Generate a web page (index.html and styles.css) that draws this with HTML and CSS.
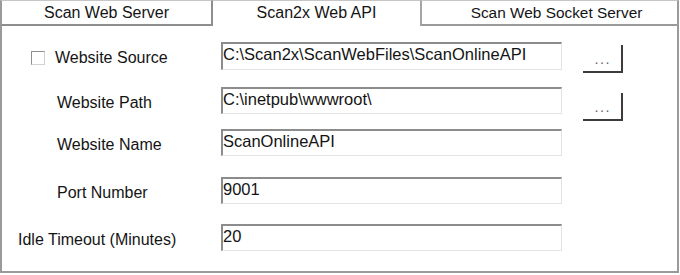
FILE: index.html
```html
<!DOCTYPE html>
<html>
<head>
<meta charset="utf-8">
<link rel="stylesheet" href="styles.css">
</head>
<body>
<div class="window">
  <div class="tabs">
    <div class="tab tab-first">Scan Web Server</div>
    <div class="tab tab-active">Scan2x Web API</div>
    <div class="tab tab-last">Scan Web Socket Server</div>
  </div>
  <div class="panel">
    <div class="form">
      <div class="label label-check"><span class="checkbox"></span>Website Source</div>
      <div class="field field-tall">C:\Scan2x\ScanWebFiles\ScanOnlineAPI</div>
      <div class="browse browse-1">...</div>

      <div class="label">Website Path</div>
      <div class="field">C:\inetpub\wwwroot\</div>
      <div class="browse browse-2">...</div>

      <div class="label">Website Name</div>
      <div class="field">ScanOnlineAPI</div>
      <div class="spacer"></div>

      <div class="label">Port Number</div>
      <div class="field">9001</div>
      <div class="spacer"></div>

      <div class="label label-wide">Idle Timeout (Minutes)</div>
      <div class="field">20</div>
      <div class="spacer"></div>
    </div>
  </div>
</div>
</body>
</html>
```

FILE: styles.css
```css
* {
  box-sizing: border-box;
}

html, body {
  margin: 0;
  padding: 0;
  background: #ffffff;
}

body {
  width: 680px;
  height: 275px;
  font-family: "Liberation Sans", Arial, sans-serif;
  font-size: 16px;
  color: #141414;
}

.window {
  width: 679px;
}

.tabs {
  display: flex;
  height: 26px;
}

.tab {
  height: 26px;
  line-height: 23px;
  text-align: center;
  white-space: nowrap;
  border-top: 1px solid #c6c6c6;
  background: #ffffff;
}

.tab-first {
  width: 213px;
  border-left: 2px solid #9a9a9a;
  border-right: 2px solid #8e8e8e;
  border-bottom: 2px solid #8e8e8e;
}

.tab-active {
  width: 207px;
}

.tab-last {
  flex: 1;
  padding-left: 14px;
  font-size: 15.4px;
  border-left: 2px solid #a6a6a6;
  border-right: 2px solid #9a9a9a;
  border-bottom: 2px solid #9a9a9a;
}

.panel {
  height: 247px;
  border-left: 2px solid #9a9a9a;
  border-right: 2px solid #9a9a9a;
  border-bottom: 2px solid #9a9a9a;
  padding-top: 16px;
}

.form {
  display: grid;
  grid-template-columns: 219px 341px 21px 40px;
  grid-template-rows: 45px 42px 48px 47px 27px;
  align-items: start;
}

.label {
  grid-column: 1;
  padding-top: 7px;
  padding-left: 55px;
  line-height: 18px;
  white-space: nowrap;
}

.label-check {
  display: flex;
  align-items: center;
  padding-left: 29px;
}

.label-wide {
  padding-left: 16px;
}

.checkbox {
  display: inline-block;
  flex: none;
  width: 14px;
  height: 14px;
  margin-right: 10px;
  border-top: 1px solid #8f8f8f;
  border-left: 1px solid #8f8f8f;
  border-right: 1px solid #d2d2d2;
  border-bottom: 1px solid #d2d2d2;
  background: #ffffff;
}

.field {
  grid-column: 2;
  height: 27px;
  padding-top: 1px;
  padding-left: 0;
  font-size: 16.5px;
  line-height: 18px;
  white-space: nowrap;
  overflow: hidden;
  border-top: 2px solid #8c8c8c;
  border-left: 2px solid #8c8c8c;
  border-right: 1px solid #e3e3e3;
  border-bottom: 1px solid #e3e3e3;
  background: #ffffff;
}

.field-tall {
  height: 28px;
}

.browse {
  grid-column: 4;
  width: 40px;
  height: 28px;
  padding-top: 2px;
  font-size: 14.5px;
  line-height: 24px;
  text-align: center;
  letter-spacing: 1.5px;
  text-indent: 1.5px;
  color: #6a6a6a;
  border-right: 2px solid #3c3c3c;
  border-bottom: 2px solid #3c3c3c;
  background: #ffffff;
}

.browse-1 {
  margin-top: 3px;
}

.browse-2 {
  margin-top: 6px;
}

.spacer {
  grid-column: 4;
}
```
